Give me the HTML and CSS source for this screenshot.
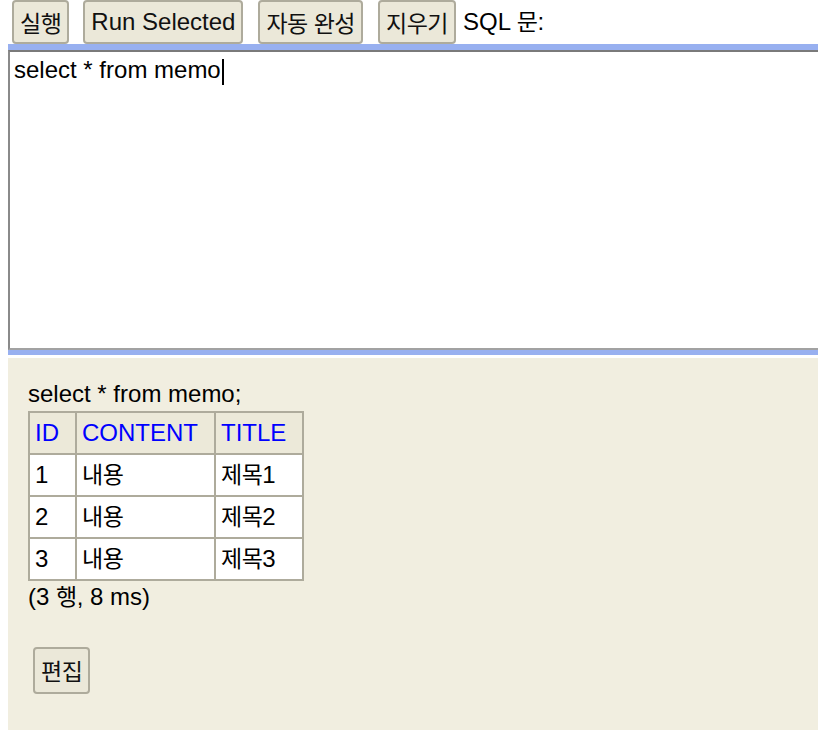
FILE: index.html
```html
<!DOCTYPE html>
<html lang="ko">
<head>
<meta charset="utf-8">
<title>H2 Console</title>
<link rel="stylesheet" href="styles.css">
</head>
<body>
<div class="toolbar">
  <button class="btn"><span class="ko">실행</span></button>
  <button class="btn">Run Selected</button>
  <button class="btn"><span class="ko">자동 완성</span></button>
  <button class="btn"><span class="ko">지우기</span></button>
  <span class="label">SQL <span class="ko">문</span>:</span>
</div>
<div class="query">
  <div class="sql-input">select * from memo<span class="caret"></span></div>
</div>
<div class="result">
  <div class="stmt">select * from memo;</div>
  <table class="grid">
    <tr><th>ID</th><th>CONTENT</th><th>TITLE</th></tr>
    <tr><td>1</td><td><span class="ko">내용</span></td><td><span class="ko">제목</span>1</td></tr>
    <tr><td>2</td><td><span class="ko">내용</span></td><td><span class="ko">제목</span>2</td></tr>
    <tr><td>3</td><td><span class="ko">내용</span></td><td><span class="ko">제목</span>3</td></tr>
  </table>
  <div class="stats">(3 <span class="ko">행</span>, 8 ms)</div>
  <button class="btn edit"><span class="ko">편집</span></button>
</div>
</body>
</html>
```
FILE: styles.css
```css
html, body {
  margin: 0;
  padding: 0;
  background: #ffffff;
}
body {
  font-family: "Liberation Sans", Arial, "Noto Sans CJK KR", sans-serif;
  font-size: 24px;
  line-height: 28px;
  color: #000000;
  width: 818px;
  height: 730px;
  overflow: hidden;
  display: flex;
  flex-direction: column;
}
.ko {
  font-family: "Noto Sans CJK KR", "Noto Sans CJK SC", sans-serif;
  font-size: 23px;
  letter-spacing: -0.5px;
  line-height: 1;
}
.toolbar {
  display: flex;
  align-items: center;
  height: 44px;
  padding-left: 12px;
  gap: 15px;
}
.btn {
  font-family: "Liberation Sans", Arial, "Noto Sans CJK KR", sans-serif;
  font-size: 24px;
  line-height: 28px;
  color: #111111;
  background: #ebe8d9;
  border: 2px solid #aeab9c;
  border-radius: 4px;
  height: 44px;
  padding: 0 6px;
  margin: 0;
  display: inline-flex;
  align-items: center;
}
.toolbar .btn:nth-child(2) { margin-left: -1px; }
.label {
  margin-left: -8px;
}
.query {
  margin-left: 8px;
  border-top: 6px solid #98b0f0;
  border-bottom: 5px solid #98b0f0;
}
.sql-input {
  border-top: 2px solid #7a7a7a;
  border-left: 2px solid #8a8a8a;
  border-bottom: 2px solid #a2a2a2;
  background: #ffffff;
  padding: 4px 4px;
  box-sizing: border-box;
  height: 300px;
  white-space: pre;
}
.caret {
  display: inline-block;
  width: 2px;
  height: 26px;
  background: #000000;
  vertical-align: -7px;
  margin-left: 1px;
}
.result {
  flex: 1;
  margin: 3px 0 0 8px;
  background: #f1eee0;
  padding: 22px 20px 0 20px;
}
.stmt {
  height: 28px;
}
.grid {
  border-collapse: collapse;
  margin-top: 3px;
  border: 2px solid #aeab9c;
}
.grid th, .grid td {
  border: 2px solid #aeab9c;
  padding: 6px 16px 6px 5px;
  text-align: left;
  font-weight: normal;
  height: 28px;
  white-space: nowrap;
}
.grid th {
  background: #ece9d9;
  color: #0000ff;
}
.grid td {
  background: #ffffff;
}
.stats {
  margin-top: 2px;
}
.btn.edit {
  margin: 36px 0 0 5px;
  height: 47px;
  padding: 0 6px;
}
```
